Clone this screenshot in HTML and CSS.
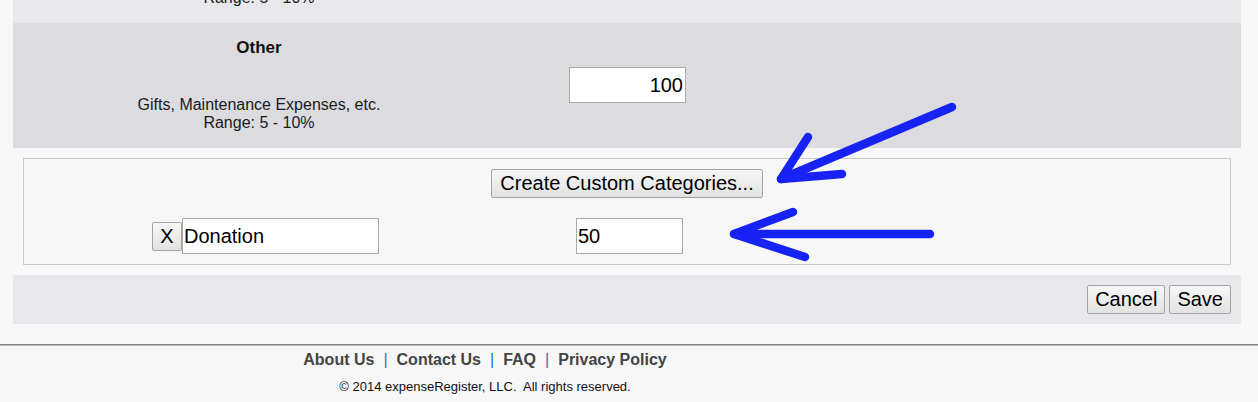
FILE: index.html
```html
<!DOCTYPE html>
<html>
<head>
<meta charset="utf-8">
<title>Budget Categories</title>
<link rel="stylesheet" href="styles.css">
</head>
<body>
<div class="page">
  <div class="main">
    <div class="row row-light row-partial">
      <div class="cat">
        <div class="desc">Range: 5 - 10%</div>
      </div>
    </div>
    <div class="row row-dark">
      <div class="cat">
        <div class="cat-name">Other</div>
        <div class="desc">Gifts, Maintenance Expenses, etc.<br>Range: 5 - 10%</div>
      </div>
      <div class="amount">
        <input class="field field-amount" type="text" value="100">
      </div>
    </div>

    <div class="custom">
      <div class="custom-head">
        <button class="btn">Create Custom Categories...</button>
      </div>
      <div class="custom-row">
        <div class="custom-name">
          <button class="btn btn-x">X</button><input class="field field-name" type="text" value="Donation">
        </div>
        <div class="custom-amount">
          <input class="field field-custom" type="text" value="50">
        </div>
      </div>
    </div>

    <div class="actions">
      <button class="btn">Cancel</button>
      <button class="btn">Save</button>
    </div>
  </div>

  <footer class="footer">
    <div class="footer-inner">
      <nav class="links">
        <a href="#">About Us</a><span class="sep">|</span><a href="#">Contact Us</a><span class="sep">|</span><a href="#">FAQ</a><span class="sep">|</span><a href="#">Privacy Policy</a>
      </nav>
      <div class="copy">© 2014 expenseRegister, LLC.&nbsp; All rights reserved.</div>
    </div>
  </footer>

  <svg class="annot" width="1258" height="402" viewBox="0 0 1258 402" aria-hidden="true">
    <g fill="none" stroke="#1623f4" stroke-width="8.5" stroke-linecap="round" stroke-linejoin="round">
      <path d="M952 107 L781 179"/>
      <path d="M808 137 L781 179 L842 174"/>
      <path d="M930 234 L734 234"/>
      <path d="M793 212 L734 234 L805 257"/>
    </g>
  </svg>
</div>
</body>
</html>
```

FILE: styles.css
```css
* { box-sizing: border-box; }

html, body {
  margin: 0;
  padding: 0;
}

body {
  background: #f8f7f8;
  font-family: "Liberation Sans", Arial, sans-serif;
  color: #111;
}

.page {
  position: relative;
  width: 1258px;
  height: 402px;
  overflow: hidden;
}

.main {
  margin: 0 17px 0 13px;
}

.row {
  display: grid;
  grid-template-columns: 492px 245px 1fr;
}

.row-light { background: #e8e7eb; }
.row-dark { background: #dcdbdf; }

.row-partial {
  height: 23px;
  overflow: hidden;
  align-items: start;
}

.row-partial .cat {
  padding: 0;
  margin-top: -11px;
}

.cat {
  text-align: center;
  padding: 15px 0 16px;
}

.cat-name {
  font-weight: bold;
  font-size: 17px;
  line-height: 20px;
  margin-bottom: 38px;
}

.desc {
  font-size: 16px;
  line-height: 18px;
  color: #1a1a1a;
}

.amount {
  display: flex;
  align-items: center;
  justify-content: center;
  padding-bottom: 1px;
}

.field {
  font-family: "Liberation Sans", Arial, sans-serif;
  font-size: 20px;
  height: 36px;
  border: 1px solid #a9a9a9;
  background: #fff;
  color: #000;
  padding: 1px 2px;
  margin: 0;
  outline: none;
}

.field-amount {
  width: 117px;
  text-align: right;
}

.field-name {
  width: 197px;
  padding-left: 1px;
}

.field-custom {
  width: 107px;
  padding-left: 1px;
}

.btn {
  font-family: "Liberation Sans", Arial, sans-serif;
  font-size: 20px;
  line-height: 23px;
  height: 29px;
  padding: 2px 7px;
  margin: 0;
  color: #000;
  border: 1px solid #a3a3a3;
  border-radius: 2px;
  background: linear-gradient(#f7f7f7, #e2e2e2);
}

.custom {
  margin: 10px 10px;
  border: 1px solid #cacaca;
  background: #f8f7f8;
  padding: 10px 0;
}

.custom-head {
  display: flex;
  justify-content: center;
}

.custom-head .btn {
  padding: 2px 8px;
}

.custom-row {
  display: grid;
  grid-template-columns: 483px 245px 1fr;
  margin-top: 20px;
}

.custom-name {
  display: flex;
  align-items: center;
  justify-content: center;
}

.custom-amount {
  display: flex;
  justify-content: center;
}

.btn-x {
  padding: 2px 7px;
  width: 30px;
}

.actions {
  background: #e8e7eb;
  height: 49px;
  padding: 10px 10px 0;
  display: flex;
  justify-content: flex-end;
  align-items: flex-start;
  gap: 4px;
}

.footer {
  margin-top: 20px;
  border-top: 1px solid #858585;
  box-shadow: inset 0 1px 0 #b8b8b8;
}

.footer-inner {
  width: 970px;
  text-align: center;
  padding-top: 6px;
}

.links {
  font-weight: bold;
  font-size: 16px;
  line-height: 18px;
}

.links a {
  color: #444;
  text-decoration: none;
}

.sep {
  color: #2f72b8;
  margin: 0 9px;
  font-weight: normal;
}

.copy {
  font-size: 13px;
  line-height: 15px;
  margin-top: 10px;
  color: #111;
}

.annot {
  position: absolute;
  top: 0;
  left: 0;
  pointer-events: none;
}
```
